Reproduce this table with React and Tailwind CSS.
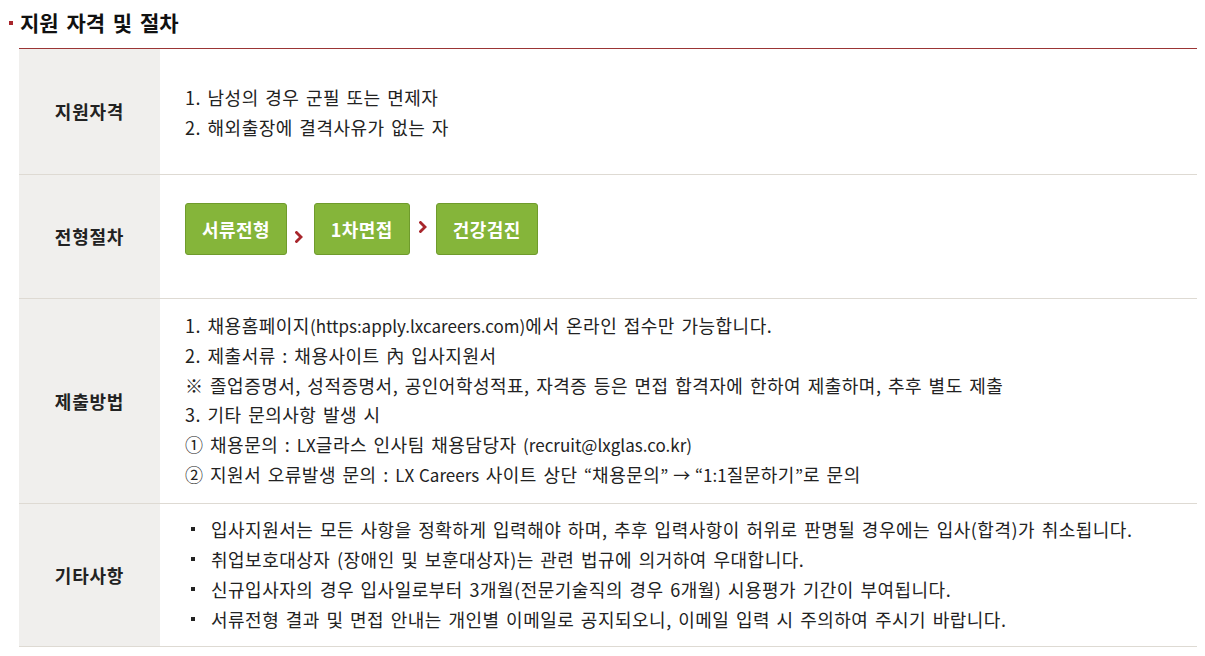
import React from "react";

const font = { fontFamily: '"Noto Sans CJK KR", "Noto Sans", sans-serif' };

const Chevron = ({ className }) => (
    <svg width="8" height="12" viewBox="0 0 8 12" className={className}>
        <path d="M1.5 1.5 L6 6 L1.5 10.5" fill="none" stroke="#a8262c" strokeWidth="2.8" strokeLinecap="square" />
    </svg>
);

// latin runs are narrower in the original font
const En = ({ children }) => <span className="text-[17px] tracking-normal [word-spacing:1px]">{children}</span>;

const Step = ({ children }) => (
    <div className="h-[52px] px-[16px] flex items-center rounded-[3px] bg-[#85b53a] border border-[#6f9b2c] text-white font-bold text-[18px] tracking-[0.4px]">
        {children}
    </div>
);

const Row = ({ title, height, children, pt }) => (
    <div className={`grid grid-cols-[141px_1fr] border-b border-[#dedad3] ${height}`}>
        <div className="bg-[#f0efed] flex items-center justify-center font-bold text-[18px] tracking-[0.8px] text-[#222]">{title}</div>
        <div className={`pl-[25px] ${pt}`}>{children}</div>
    </div>
);

const Bullet = ({ children }) => (
    <li className="flex items-center">
        <span className="w-[4px] h-[4px] bg-[#222] ml-[6px] mr-[16px] shrink-0" />
        <span>{children}</span>
    </li>
);

export default function App() {
    return (
        <div className="bg-white min-h-screen pl-[19px] pr-[8px] pt-[10px] text-[#222]" style={font}>
            <h2 className="flex items-center text-[21px] font-bold text-[#111] h-[26px] -ml-[10px] [word-spacing:3px]">
                <span className="w-[4px] h-[4px] bg-[#a8262c] mr-[7px]" />
                지원 자격 및 절차
            </h2>
            <div className="mt-[12px] border-t border-[#9b3535]">
                <Row title="지원자격" height="h-[126px]" pt="pt-[33px]">
                    <div className="text-[18px] leading-[30px] tracking-[0.5px] [word-spacing:2px]">
                        <p>1. 남성의 경우 군필 또는 면제자</p>
                        <p>2. 해외출장에 결격사유가 없는 자</p>
                    </div>
                </Row>
                <Row title="전형절차" height="h-[124px]" pt="pt-[28px]">
                    <div className="flex items-start">
                        <Step>서류전형</Step>
                        <Chevron className="mt-[28px] ml-[8px] mr-[11px]" />
                        <Step>1차면접</Step>
                        <Chevron className="mt-[18px] ml-[9px] mr-[9px]" />
                        <Step>건강검진</Step>
                    </div>
                </Row>
                <Row title="제출방법" height="h-[205px]" pt="pt-[12px]">
                    <div className="text-[18px] leading-[29.8px] tracking-[0.5px] [word-spacing:2px]">
                        <p>1. 채용홈페이지<En>(https:apply.lxcareers.com)</En>에서 온라인 접수만 가능합니다.</p>
                        <p>2. 제출서류 : 채용사이트 內 입사지원서</p>
                        <p>※ 졸업증명서, 성적증명서, 공인어학성적표, 자격증 등은 면접 합격자에 한하여 제출하며, 추후 별도 제출</p>
                        <p>3. 기타 문의사항 발생 시</p>
                        <p>① 채용문의 : <En>LX</En>글라스 인사팀 채용담당자 <En>(recruit@lxglas.co.kr)</En></p>
                        <p>② 지원서 오류발생 문의 : <En>LX Careers</En> 사이트 상단 <En>“</En>채용문의<En>” → “1:1</En>질문하기<En>”</En>로 문의</p>
                    </div>
                </Row>
                <Row title="기타사항" height="h-[143px]" pt="pt-[10px]">
                    <ul className="text-[18px] leading-[30px] tracking-[0.5px] [word-spacing:2px]">
                        <Bullet>입사지원서는 모든 사항을 정확하게 입력해야 하며, 추후 입력사항이 허위로 판명될 경우에는 입사(합격)가 취소됩니다.</Bullet>
                        <Bullet>취업보호대상자 (장애인 및 보훈대상자)는 관련 법규에 의거하여 우대합니다.</Bullet>
                        <Bullet>신규입사자의 경우 입사일로부터 3개월(전문기술직의 경우 6개월) 시용평가 기간이 부여됩니다.</Bullet>
                        <Bullet>서류전형 결과 및 면접 안내는 개인별 이메일로 공지되오니, 이메일 입력 시 주의하여 주시기 바랍니다.</Bullet>
                    </ul>
                </Row>
            </div>
        </div>
    );
}
